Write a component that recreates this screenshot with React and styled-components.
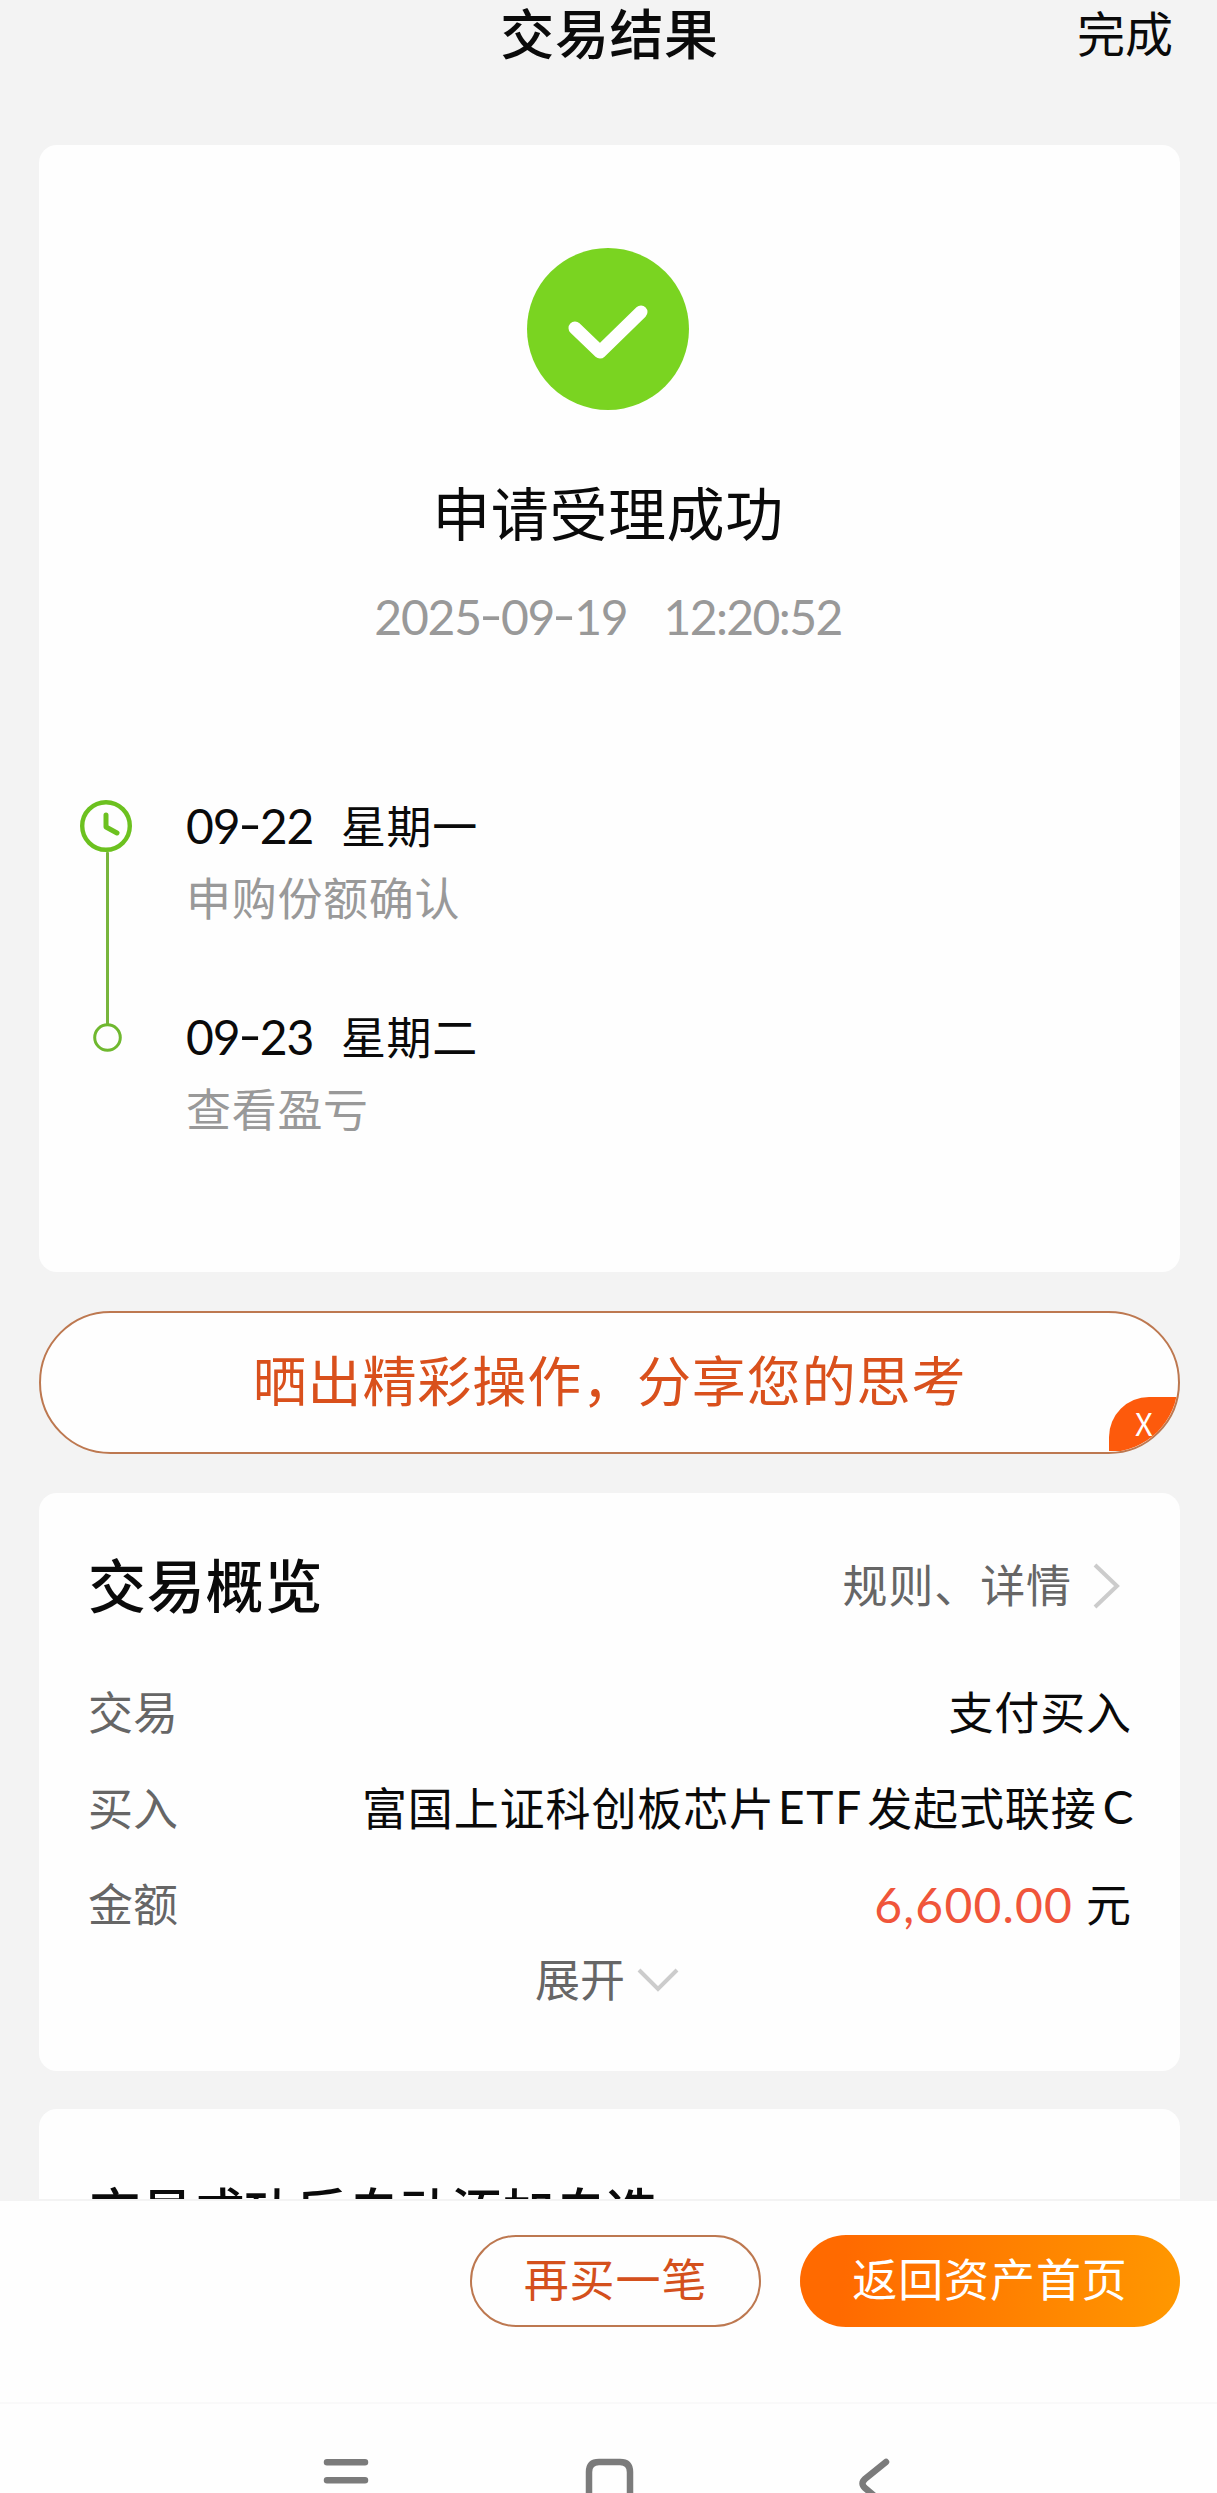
import React from "react";
import styled, { createGlobalStyle, css } from "styled-components";

const GlobalStyle = createGlobalStyle`
  * {
    box-sizing: border-box;
  }
  body {
    margin: 0;
    background: #f3f3f3;
    font-family: "Noto Sans CJK SC", sans-serif;
    color: #0a0a0a;
  }
`;

// digits with a wider, raised hyphen between the groups
const DateText = ({ value }) =>
  value.split("-").map((part, i) => (
    <React.Fragment key={i}>
      {i > 0 && <Dash>-</Dash>}
      {part}
    </React.Fragment>
  ));

const steps = [
  { date: "09-22", weekday: "星期一", text: "申购份额确认" },
  { date: "09-23", weekday: "星期二", text: "查看盈亏" }
];

const App = () => (
  <Page>
    <GlobalStyle />

    <Content>
      <Header>
        <HeaderTitle>交易结果</HeaderTitle>
        <Done>完成</Done>
      </Header>

      <ResultCard>
        <CheckIcon viewBox="0 0 162 162">
          <circle cx="81" cy="81" r="81" fill="#7ad421" />
          <path d="M48 80 L73 104 L114 64" />
        </CheckIcon>
        <ResultTitle>申请受理成功</ResultTitle>
        <ResultTime>
          <span><DateText value="2025-09-19" /></span>
          <Clock>12:20:52</Clock>
        </ResultTime>

        <Timeline>
          <TimelineTrack viewBox="0 0 56 256">
            <path d="M28.5 53 V224" stroke="#77b53c" strokeWidth="3" />
            <circle cx="27" cy="26" r="23.8" stroke="#6cc11f" strokeWidth="4.4" />
            <path d="M27 15 V27 L38 33" stroke="#6cc11f" strokeWidth="5" />
            <circle cx="28.5" cy="237.5" r="12.8" stroke="#6fb82f" strokeWidth="3" />
          </TimelineTrack>
          <Steps>
            {steps.map(step => (
              <Step key={step.date}>
                <StepDate>
                  <StepDay><DateText value={step.date} /></StepDay>
                  {step.weekday}
                </StepDate>
                <StepText>{step.text}</StepText>
              </Step>
            ))}
          </Steps>
        </Timeline>
      </ResultCard>

      <ShareBanner>
        晒出精彩操作，分享您的思考
        <CloseBadge>X</CloseBadge>
      </ShareBanner>

      <OverviewCard>
        <OverviewHead>
          <OverviewTitle>交易概览</OverviewTitle>
          <RuleLink>
            规则、详情
            <ArrowRight viewBox="0 0 28 46">
              <path d="M2 2 L24 23 L2 44" />
            </ArrowRight>
          </RuleLink>
        </OverviewHead>
        <Row>
          <Label>交易</Label>
          <Value>支付买入</Value>
        </Row>
        <Row>
          <Label>买入</Label>
          <Value>
            富国上证科创板芯片<Latin>ETF</Latin>发起式联接<Latin $last>C</Latin>
          </Value>
        </Row>
        <Row>
          <Label>金额</Label>
          <Value>
            <Money>6,600.00</Money>元
          </Value>
        </Row>
        <Expand>
          展开
          <ArrowDown viewBox="0 0 42 24">
            <path d="M2 2 L21 21 L40 2" />
          </ArrowDown>
        </Expand>
      </OverviewCard>

      <NextCard>交易成功后自动添加自选</NextCard>
    </Content>

    <Footer>
      <Button>再买一笔</Button>
      <Button $primary>返回资产首页</Button>
    </Footer>

    <NavBar>
      <NavIcon viewBox="0 0 60 40">
        <path d="M11 9.2 H49 M11 27.2 H49" />
      </NavIcon>
      <NavIcon viewBox="0 0 60 40">
        <path d="M10 44 V19 Q10 9 20 9 H41 Q51 9 51 19 V44" />
      </NavIcon>
      <NavIcon viewBox="0 0 60 40">
        <path d="M44 9 L23 26 Q18 30.5 23 35 L36 46" />
      </NavIcon>
    </NavBar>
  </Page>
);

const Page = styled.div`
  display: flex;
  flex-direction: column;
  width: 1217px;
  height: 2493px;
  overflow: hidden;
  background: #f3f3f3;
`;

const Content = styled.div`
  height: 2199px;
  padding: 0 37px 0 39px;
  overflow: hidden;
`;

const Header = styled.div`
  display: grid;
  grid-template-columns: 1fr auto 1fr;
  align-items: center;
  height: 63px;
  margin-bottom: 82px;
  line-height: 63px;
`;

const HeaderTitle = styled.div`
  grid-column: 2;
  font-size: 54px;
  font-weight: 500;
  letter-spacing: 0.6px;
`;

const Done = styled.div`
  justify-self: end;
  padding-right: 7px;
  font-size: 48px;
`;

const card = css`
  background: #fefefe;
  border-radius: 18px;
`;

const ResultCard = styled.div`
  ${card}
  display: flex;
  flex-direction: column;
  align-items: center;
  height: 1127px;
  padding: 103px 3px 0 0;
`;

const CheckIcon = styled.svg`
  width: 162px;
  height: 162px;

  path {
    fill: none;
    stroke: #fff;
    stroke-width: 13;
    stroke-linecap: round;
    stroke-linejoin: round;
  }
`;

const ResultTitle = styled.div`
  margin-top: 61px;
  font-size: 58px;
  line-height: 80px;
  letter-spacing: 0.6px;
`;

const ResultTime = styled.div`
  display: flex;
  gap: 36px;
  margin-top: 36px;
  color: #999;
  font-family: Lato, sans-serif;
  font-size: 48px;
  line-height: 60px;
  letter-spacing: -1.2px;
`;

const Clock = styled.span`
  letter-spacing: -1.6px;
`;

const Dash = styled.span`
  display: inline-block;
  width: 20px;
  text-align: center;
  letter-spacing: 0;
  transform: translateY(-2px) scaleX(1.35);
`;

const Timeline = styled.div`
  display: flex;
  align-self: stretch;
  margin-top: 147px;
  padding-left: 40px;
`;

const TimelineTrack = styled.svg`
  flex: none;
  width: 56px;
  height: 256px;
  margin-top: 6px;
  fill: none;
  stroke-linecap: round;
  stroke-linejoin: round;
`;

const Steps = styled.div`
  padding-left: 51px;
`;

const Step = styled.div`
  height: 211px;
`;

const StepDate = styled.div`
  display: flex;
  font-size: 45px;
  line-height: 62px;
  letter-spacing: 0.6px;
`;

const StepDay = styled.span`
  width: 155px;
  padding-top: 1px;
  font-family: Lato, sans-serif;
  font-size: 48px;
  letter-spacing: -1px;
`;

const StepText = styled.div`
  margin-top: 9px;
  color: #999;
  font-size: 45px;
  line-height: 62px;
  letter-spacing: 0.7px;
`;

const ShareBanner = styled.div`
  position: relative;
  display: flex;
  align-items: center;
  justify-content: center;
  height: 143px;
  margin-top: 39px;
  padding-bottom: 9px;
  overflow: hidden;
  border: 2px solid #bd7850;
  border-radius: 72px;
  background: #fefefe;
  color: #d9501c;
  font-size: 54px;
  letter-spacing: 0.9px;
`;

const CloseBadge = styled.span`
  position: absolute;
  right: 0;
  bottom: 1px;
  width: 69px;
  height: 54px;
  padding-left: 26px;
  border-top-left-radius: 40px;
  background: #fd5a0c;
  color: #fff;
  font-size: 31px;
  line-height: 52px;
`;

const OverviewCard = styled.div`
  ${card}
  height: 578px;
  margin-top: 39px;
  padding: 50px 48px 0 49px;
`;

const OverviewHead = styled.div`
  display: flex;
  align-items: center;
  justify-content: space-between;
  height: 80px;
  margin-bottom: 40px;
`;

const OverviewTitle = styled.div`
  font-size: 58px;
  font-weight: 500;
  letter-spacing: 0.8px;
`;

const RuleLink = styled.div`
  display: flex;
  align-items: center;
  padding: 1px 11px 0 0;
  color: #666;
  font-size: 45px;
  letter-spacing: 0.9px;
`;

const arrow = css`
  fill: none;
  stroke: #ccc;
  stroke-width: 4;
`;

const ArrowRight = styled.svg`
  ${arrow}
  width: 28px;
  height: 46px;
  margin: 4px 0 0 21px;
`;

const ArrowDown = styled.svg`
  ${arrow}
  width: 42px;
  height: 24px;
  margin: 6px 0 0 12px;
`;

const Row = styled.div`
  display: flex;
  justify-content: space-between;
  height: 96px;
  font-size: 45px;
  line-height: 96px;
`;

const Label = styled.span`
  color: #666;
`;

const Value = styled.span`
  display: flex;
  letter-spacing: 0.9px;
`;

const Latin = styled.span`
  margin: ${props => (props.$last ? "0 -2px 0 6px" : "0 4px 0 3px")};
  font-family: Lato, sans-serif;
  font-size: 46px;
  letter-spacing: ${props => (props.$last ? "0.6px" : "1.8px")};
`;

const Money = styled.span`
  margin-right: 13px;
  padding-top: 2px;
  color: #f0553a;
  font-family: Lato, sans-serif;
  font-size: 48px;
  letter-spacing: 1.2px;
`;

const Expand = styled.div`
  display: flex;
  align-items: center;
  justify-content: center;
  height: 52px;
  padding-right: 6px;
  color: #666;
  font-size: 45px;
`;

const NextCard = styled.div`
  ${card}
  height: 200px;
  margin-top: 38px;
  padding: 65px 50px 0;
  font-size: 52px;
  font-weight: 500;
  line-height: 72px;
  letter-spacing: -0.3px;
`;

const Footer = styled.div`
  display: flex;
  flex: none;
  justify-content: flex-end;
  gap: 39px;
  height: 205px;
  padding: 34px 37px 0 0;
  border-top: 2px solid #f3f3f3;
  border-bottom: 2px solid #f9f9f9;
  background: #fefefe;
`;

const Button = styled.button`
  width: ${props => (props.$primary ? "380px" : "291px")};
  height: 92px;
  padding: 0 0 7px;
  border: ${props => (props.$primary ? "none" : "2px solid #bd7850")};
  border-radius: 46px;
  background: ${props =>
    props.$primary ? "linear-gradient(95deg, #ff6a00 12%, #ff9800)" : "#fefefe"};
  color: ${props => (props.$primary ? "#fff" : "#d4501c")};
  font-family: inherit;
  font-size: 45px;
  letter-spacing: 0.9px;
`;

const NavBar = styled.div`
  display: flex;
  flex: none;
  gap: 203px;
  height: 89px;
  padding: 49px 0 0 316px;
  background: #fefefe;
`;

const NavIcon = styled.svg`
  flex: none;
  width: 60px;
  height: 40px;
  fill: none;
  stroke: #7b7b7b;
  stroke-width: 6.5;
  stroke-linecap: round;
`;

export default App;
